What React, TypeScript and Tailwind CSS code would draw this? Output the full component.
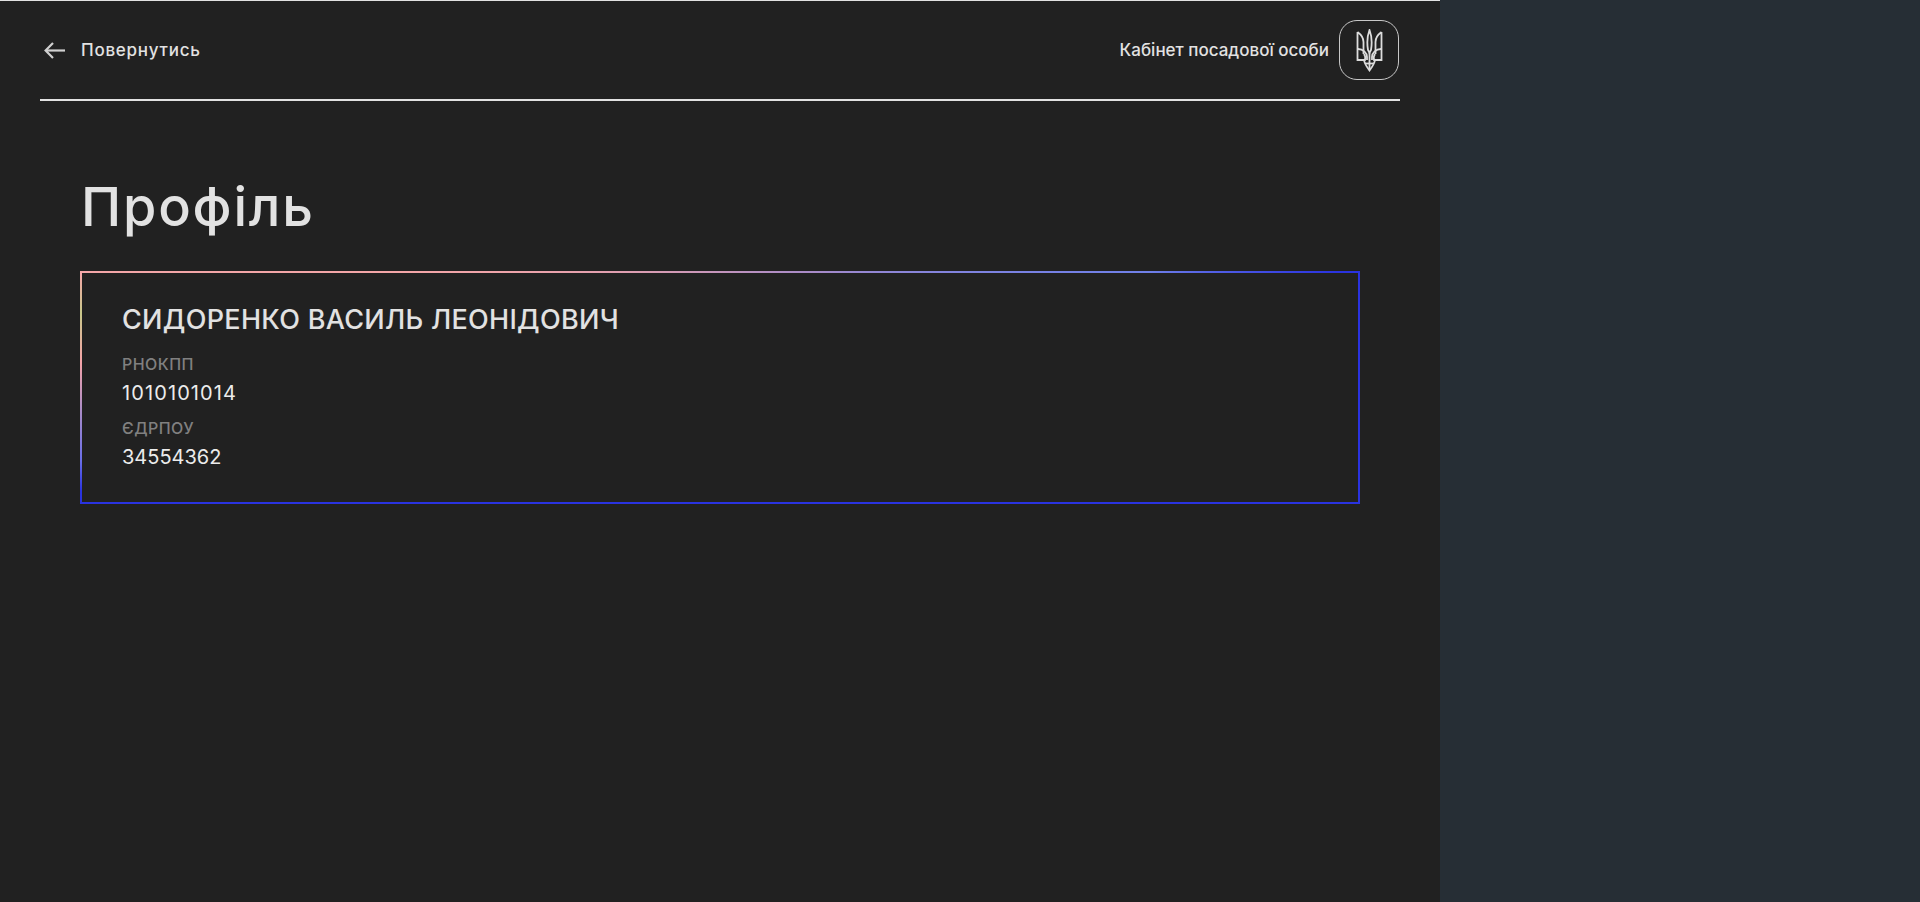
import React from 'react';

// Тризуб: drawn as outline strokes
function Tryzub() {
    return (
        <svg width="27" height="43" viewBox="0 0 27 43" fill="none" stroke="#dcdcdc" strokeWidth="1.8" strokeLinejoin="miter">
            <path d="M1.5 3 L1.5 31 L9 31 C9.6 29 9.4 27 8 25 M1.5 3 C5 5.5 7.5 8.5 7.5 13 L7.5 25" />
            <path d="M25.5 3 L25.5 31 L18 31 C17.4 29 17.6 27 19 25 M25.5 3 C22 5.5 19.5 8.5 19.5 13 L19.5 25" />
            <path d="M13.5 1 C11.2 7 11 15 12 21 L13.5 24 L15 21 C16 15 15.8 7 13.5 1 Z" />
            <path d="M2 20 C7 20 11 23.5 11 28 L11 31 M25 20 C20 20 16 23.5 16 28 L16 31" />
            <path d="M8 31 C8.5 35 11 38 13.5 41.5 C16 38 18.5 35 19 31" />
            <path d="M9 34.5 L18 34.5" />
            <path d="M13.5 24 L13.5 40" />
        </svg>
    );
}

function ArrowLeft() {
    return (
        <svg width="21" height="17" viewBox="0 0 21 17" fill="none" stroke="#d0d0d0" strokeWidth="2.2">
            <path d="M21 8.5 H2" />
            <path d="M9 1 L1.6 8.5 L9 16" />
        </svg>
    );
}

function Field({ label, value, valueClass }: { label: string; value: string; valueClass: string }) {
    return (
        <div className="flex flex-col gap-[4px]">
            <p className="text-[16px] leading-[22px] font-medium tracking-[0.45px] text-[#808080] uppercase">{label}</p>
            <p className={`text-[20px] leading-[28px] text-[#ececec] ${valueClass}`}>{value}</p>
        </div>
    );
}

export default function App() {
    return (
        <div className="flex min-h-screen bg-[#262e35] font-['Inter',sans-serif]">
            <main className="flex w-[1440px] flex-col border-t border-[#e2e2e2] bg-[#212121] px-[40px]">
                {/* Header */}
                <header className="flex h-[100px] items-center justify-between border-b-2 border-[#e2e2e2]">
                    <a className="flex items-center gap-[16px] pl-[4px] text-[17px] font-medium tracking-[0.75px] text-[#e2e2e2]">
                        <ArrowLeft />
                        <span className="pt-[2px]">Повернутись</span>
                    </a>
                    <div className="mr-[1px] flex items-center gap-[10px]">
                        <span className="pt-[2px] text-[17px] font-medium text-[#e2e2e2]">Кабінет посадової особи</span>
                        <div className="flex h-[60px] w-[60px] items-center justify-center rounded-[18px] border border-[#c8c8c8]">
                            <Tryzub />
                        </div>
                    </div>
                </header>

                {/* Profile */}
                <section className="px-[40px]">
                    <h1 className="mt-[76px] pl-[1px] text-[54px] leading-[60px] font-medium tracking-[1.8px] text-[#e2e2e2]">Профіль</h1>
                    <div className="mt-[34px] border-2 [border-image:conic-gradient(from_260deg,#2a33e0_0deg,#2a33e0_0.7deg,#6a6ee8_3.4deg,#a88bc8_7.8deg,#f4a3a8_12.3deg,#c8c88a_16.7deg,#f4a6a8_20.2deg,#f4a6a8_29.8deg,#a88bc8_139.7deg,#7080e8_174.9deg,#2a33e0_179.4deg,#2a33e0_360deg)_1] px-[40px] pt-[29px] pb-[31px]">
                        <h2 className="text-[27px] leading-[36px] font-medium tracking-[0.3px] text-[#e2e2e2] uppercase">Сидоренко Василь Леонідович</h2>
                        <div className="mt-[15px] flex flex-col gap-[10px]">
                            <Field label="РНОКПП" value="1010101014" valueClass="tracking-[1.1px]" />
                            <Field label="ЄДРПОУ" value="34554362" valueClass="tracking-[0px]" />
                        </div>
                    </div>
                </section>
            </main>
        </div>
    );
}
